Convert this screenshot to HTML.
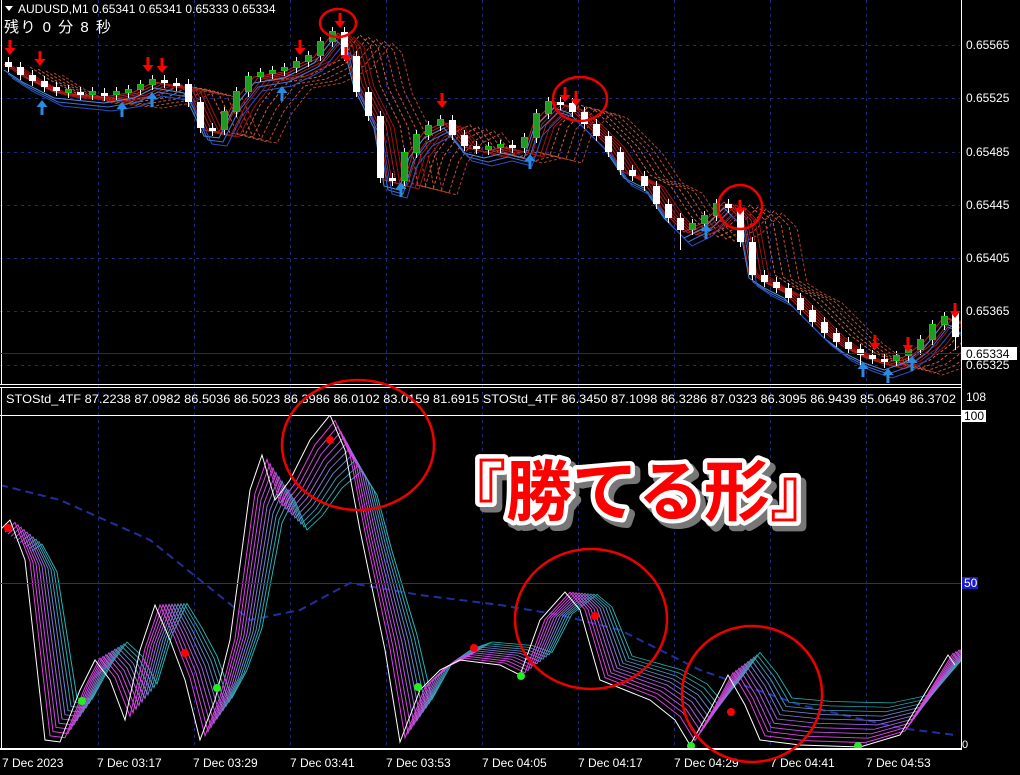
<!DOCTYPE html>
<html><head><meta charset="utf-8"><style>
html,body{margin:0;padding:0;background:#000;width:1020px;height:775px;overflow:hidden}
svg{display:block;font-family:"Liberation Sans","Noto Sans CJK JP",sans-serif}
</style></head><body>
<svg width="1020" height="775" viewBox="0 0 1020 775" xmlns="http://www.w3.org/2000/svg" xmlns:xlink="http://www.w3.org/1999/xlink">
<defs>
<path id="pr" fill="none" d="M0 62 L20 75 L50 90 L100 95 L130 90 L150 80 L180 85 L200 128 L215 130 L230 100 L250 75 L280 70 L310 55 L330 30 L340 40 L350 80 L370 120 L380 178 L395 182 L405 150 L420 130 L440 120 L460 145 L480 150 L500 145 L520 150 L530 120 L550 100 L565 105 L580 120 L600 140 L620 170 L640 180 L660 210 L680 230 L700 220 L720 200 L735 215 L745 270 L760 280 L780 290 L800 310 L820 330 L840 345 L860 355 L880 362 L900 355 L920 340 L940 315 L955 322"/>
<path id="st" fill="none" d="M0 530 L10 520 L25 560 L45 740 L60 742 L80 690 L95 660 L110 680 L125 720 L140 650 L155 605 L170 640 L185 680 L200 740 L215 700 L230 640 L250 490 L262 455 L275 500 L290 480 L310 440 L330 415 L345 450 L360 530 L385 650 L400 742 L420 690 L440 670 L460 660 L500 665 L520 675 L540 620 L565 592 L580 610 L600 680 L625 690 L650 700 L675 720 L690 745 L710 710 L728 675 L745 705 L760 740 L800 745 L860 747 L900 735 L930 685 L948 655 L955 665"/>
<path id="da" fill="#f00" d="M-1.5 -15 h3 v8 h4 l-5.5 7 l-5.5 -7 h4z"/>
<path id="ua" fill="#2a8ae0" d="M-1.5 15 h3 v-8 h4 l-5.5 -7 l-5.5 7 h4z"/>
<clipPath id="ct"><rect x="2" y="0" width="959" height="384"/></clipPath>
<clipPath id="cb"><rect x="2" y="416" width="959" height="332"/></clipPath>
</defs>
<rect width="1020" height="775" fill="#000"/>
<path stroke="#1c2a7a" stroke-dasharray="3,4" fill="none" d="M98.5 0V748M194.5 0V748M290.5 0V748M386.5 0V748M482.5 0V748M578.5 0V748M674.5 0V748M770.5 0V748M866.5 0V748M0 45.5H960M0 98.5H960M0 152.5H960M0 205.5H960M0 258.5H960M0 311.5H960M0 365.5H960"/>
<g clip-path="url(#ct)">
<g stroke-width="1">
<use xlink:href="#pr" href="#pr" stroke="#d06040" stroke-dasharray="3,2" transform="translate(30,5)"/>
<use xlink:href="#pr" href="#pr" stroke="#d06040" stroke-dasharray="3,2" transform="translate(38,7)"/>
<use xlink:href="#pr" href="#pr" stroke="#c05030" stroke-dasharray="3,2" transform="translate(46,9)"/>
<use xlink:href="#pr" href="#pr" stroke="#c05030" stroke-dasharray="3,2" transform="translate(54,11)"/>
<use xlink:href="#pr" href="#pr" stroke="#b04030" stroke-dasharray="3,2" transform="translate(62,13)"/>
<use xlink:href="#pr" href="#pr" stroke="#c02020" transform="translate(4,2)"/>
<use xlink:href="#pr" href="#pr" stroke="#c02020" transform="translate(8,3)"/>
<use xlink:href="#pr" href="#pr" stroke="#b01818" transform="translate(12,4)"/>
<use xlink:href="#pr" href="#pr" stroke="#b01818" transform="translate(16,5)"/>
<use xlink:href="#pr" href="#pr" stroke="#a01010" transform="translate(20,6)"/>
<use xlink:href="#pr" href="#pr" stroke="#a01010" transform="translate(24,7)"/>
<use xlink:href="#pr" href="#pr" stroke="#4a90e0" transform="translate(4,8)"/>
<use xlink:href="#pr" href="#pr" stroke="#3a70d0" transform="translate(8,12)"/>
<use xlink:href="#pr" href="#pr" stroke="#2a50c0" transform="translate(12,16)"/>
</g>
<g stroke="#fff" stroke-width="1">
<path d="M8.5 57V72M20.5 62V80M32.5 70V86M44.5 76V92M56.5 82V96M68.5 85V98M80.5 87V100M92.5 87V100M104.5 88V101M116.5 87V100M128.5 85V98M140.5 80V95M152.5 75V90M164.5 75V88M176.5 78V91M188.5 79V107M200.5 97V133M212.5 123V136M224.5 107V135M236.5 87V117M248.5 72V97M260.5 68V82M272.5 66V79M284.5 63V76M296.5 57V73M308.5 51V67M320.5 37V61M332.5 27V47M344.5 27V61M356.5 51V97M368.5 87V121M380.5 111V183M392.5 173V186M404.5 148V186M416.5 130V158M428.5 121V140M440.5 115V131M452.5 115V140M464.5 130V151M476.5 141V154M488.5 142V155M500.5 140V153M512.5 140V153M524.5 133V153M536.5 109V143M548.5 97V119M560.5 97V110M572.5 98V117M584.5 107V129M596.5 119V141M608.5 131V157M620.5 147V175M632.5 165V181M644.5 171V191M656.5 181V209M668.5 199V223M680.5 213V250M692.5 219V235M704.5 211V229M716.5 199V221M728.5 199V213M740.5 203V247M752.5 237V280M764.5 270V287M776.5 277V293M788.5 283V303M800.5 293V315M812.5 305V327M824.5 317V338M836.5 328V347M848.5 337V354M860.5 344V365M872.5 350V364M884.5 354V368M896.5 351V366M908.5 345V361M920.5 335V355M932.5 320V345M944.5 312V330M955.5 305V350"/>
</g>
<g fill="#fff">
<rect x="5" y="62" width="7" height="5"/><rect x="17" y="67" width="7" height="8"/><rect x="29" y="75" width="7" height="6"/><rect x="41" y="81" width="7" height="6"/><rect x="53" y="87" width="7" height="4"/><rect x="77" y="92" width="7" height="3"/><rect x="101" y="93" width="7" height="3"/><rect x="161" y="80" width="7" height="3"/><rect x="173" y="83" width="7" height="3"/><rect x="185" y="84" width="7" height="18"/><rect x="197" y="102" width="7" height="26"/><rect x="209" y="128" width="7" height="3"/><rect x="341" y="32" width="7" height="24"/><rect x="353" y="56" width="7" height="36"/><rect x="365" y="92" width="7" height="24"/><rect x="377" y="116" width="7" height="62"/><rect x="389" y="178" width="7" height="3"/><rect x="449" y="120" width="7" height="15"/><rect x="461" y="135" width="7" height="11"/><rect x="473" y="146" width="7" height="3"/><rect x="509" y="145" width="7" height="3"/><rect x="557" y="102" width="7" height="3"/><rect x="569" y="103" width="7" height="9"/><rect x="581" y="112" width="7" height="12"/><rect x="593" y="124" width="7" height="12"/><rect x="605" y="136" width="7" height="16"/><rect x="617" y="152" width="7" height="18"/><rect x="629" y="170" width="7" height="6"/><rect x="641" y="176" width="7" height="10"/><rect x="653" y="186" width="7" height="18"/><rect x="665" y="204" width="7" height="14"/><rect x="677" y="218" width="7" height="12"/><rect x="725" y="204" width="7" height="4"/><rect x="737" y="208" width="7" height="34"/><rect x="749" y="242" width="7" height="33"/><rect x="761" y="275" width="7" height="7"/><rect x="773" y="282" width="7" height="6"/><rect x="785" y="288" width="7" height="10"/><rect x="797" y="298" width="7" height="12"/><rect x="809" y="310" width="7" height="12"/><rect x="821" y="322" width="7" height="11"/><rect x="833" y="333" width="7" height="9"/><rect x="845" y="342" width="7" height="7"/><rect x="857" y="349" width="7" height="6"/><rect x="869" y="355" width="7" height="4"/><rect x="881" y="359" width="7" height="3"/><rect x="952" y="312" width="7" height="25"/>
</g>
<g fill="#229922" stroke="#0c0" stroke-width="1">
<rect x="65.5" y="89.5" width="6" height="3"/><rect x="89.5" y="91.5" width="6" height="3"/><rect x="113.5" y="91.5" width="6" height="3"/><rect x="125.5" y="89.5" width="6" height="3"/><rect x="137.5" y="84.5" width="6" height="5"/><rect x="149.5" y="79.5" width="6" height="5"/><rect x="221.5" y="111.5" width="6" height="18"/><rect x="233.5" y="91.5" width="6" height="20"/><rect x="245.5" y="76.5" width="6" height="15"/><rect x="257.5" y="72.5" width="6" height="4"/><rect x="269.5" y="70.5" width="6" height="3"/><rect x="281.5" y="67.5" width="6" height="3"/><rect x="293.5" y="61.5" width="6" height="6"/><rect x="305.5" y="55.5" width="6" height="6"/><rect x="317.5" y="41.5" width="6" height="14"/><rect x="329.5" y="31.5" width="6" height="10"/><rect x="401.5" y="152.5" width="6" height="28"/><rect x="413.5" y="134.5" width="6" height="18"/><rect x="425.5" y="125.5" width="6" height="9"/><rect x="437.5" y="119.5" width="6" height="6"/><rect x="485.5" y="146.5" width="6" height="3"/><rect x="497.5" y="144.5" width="6" height="3"/><rect x="521.5" y="137.5" width="6" height="10"/><rect x="533.5" y="113.5" width="6" height="24"/><rect x="545.5" y="101.5" width="6" height="12"/><rect x="689.5" y="223.5" width="6" height="6"/><rect x="701.5" y="215.5" width="6" height="8"/><rect x="713.5" y="203.5" width="6" height="12"/><rect x="893.5" y="355.5" width="6" height="5"/><rect x="905.5" y="349.5" width="6" height="6"/><rect x="917.5" y="339.5" width="6" height="10"/><rect x="929.5" y="324.5" width="6" height="15"/><rect x="941.5" y="316.5" width="6" height="8"/>
</g>
<use href="#da" xlink:href="#da" x="10" y="55"/><use href="#da" xlink:href="#da" x="40" y="66"/><use href="#da" xlink:href="#da" x="148" y="72"/><use href="#da" xlink:href="#da" x="162" y="73"/><use href="#da" xlink:href="#da" x="300" y="55"/><use href="#da" xlink:href="#da" x="340" y="28"/><use href="#da" xlink:href="#da" x="346" y="62"/><use href="#da" xlink:href="#da" x="442" y="108"/><use href="#da" xlink:href="#da" x="565" y="102"/><use href="#da" xlink:href="#da" x="576" y="106"/><use href="#da" xlink:href="#da" x="740" y="215"/><use href="#da" xlink:href="#da" x="875" y="350"/><use href="#da" xlink:href="#da" x="908" y="352"/><use href="#da" xlink:href="#da" x="955" y="318"/>
<use href="#ua" xlink:href="#ua" x="42" y="100"/><use href="#ua" xlink:href="#ua" x="122" y="102"/><use href="#ua" xlink:href="#ua" x="152" y="92"/><use href="#ua" xlink:href="#ua" x="282" y="86"/><use href="#ua" xlink:href="#ua" x="401" y="182"/><use href="#ua" xlink:href="#ua" x="530" y="154"/><use href="#ua" xlink:href="#ua" x="706" y="224"/><use href="#ua" xlink:href="#ua" x="863" y="362"/><use href="#ua" xlink:href="#ua" x="888" y="368"/><use href="#ua" xlink:href="#ua" x="912" y="356"/>
</g>
<g clip-path="url(#cb)">
<path d="M0 485 L60 500 L150 540 L250 620 L300 610 L350 583 L420 595 L500 605 L560 615 L620 630 L700 670 L800 705 L900 728 L955 735" fill="none" stroke="#2030a0" stroke-width="2" stroke-dasharray="8,5"/>
<g stroke-width="1">
<use href="#st" xlink:href="#st" stroke="#20b8b8" transform="translate(32,180) scale(1,0.7)"/>
<use href="#st" xlink:href="#st" stroke="#30a8b8" transform="translate(29,162) scale(1,0.73)"/>
<use href="#st" xlink:href="#st" stroke="#4898c0" transform="translate(26,144) scale(1,0.76)"/>
<use href="#st" xlink:href="#st" stroke="#6888c8" transform="translate(23,126) scale(1,0.79)"/>
<use href="#st" xlink:href="#st" stroke="#8878d0" transform="translate(20,108) scale(1,0.82)"/>
<use href="#st" xlink:href="#st" stroke="#a068d8" transform="translate(17,90) scale(1,0.85)"/>
<use href="#st" xlink:href="#st" stroke="#b858e0" transform="translate(14,72) scale(1,0.88)"/>
<use href="#st" xlink:href="#st" stroke="#c850e0" transform="translate(11,54) scale(1,0.91)"/>
<use href="#st" xlink:href="#st" stroke="#d848e0" transform="translate(8,36) scale(1,0.94)"/>
<use href="#st" xlink:href="#st" stroke="#e040e0" transform="translate(5,18) scale(1,0.97)"/>
<use href="#st" xlink:href="#st" stroke="#fff"/>
</g>
<g fill="#f00"><circle cx="8" cy="528" r="4"/><circle cx="185" cy="653" r="4"/><circle cx="330" cy="440" r="4"/><circle cx="474" cy="648" r="4"/><circle cx="595" cy="616" r="4"/><circle cx="731" cy="712" r="4"/></g>
<g fill="#2e2"><circle cx="82" cy="701" r="4"/><circle cx="217" cy="688" r="4"/><circle cx="418" cy="687" r="4"/><circle cx="521" cy="676" r="4"/><circle cx="691" cy="746" r="4"/><circle cx="858" cy="746" r="4"/></g>
</g>
<line x1="961.5" y1="0" x2="961.5" y2="750" stroke="#fff"/>
<line x1="1.5" y1="0" x2="1.5" y2="385" stroke="#fff"/>
<line x1="0" y1="384.5" x2="961" y2="384.5" stroke="#fff"/>
<line x1="0" y1="387.5" x2="961" y2="387.5" stroke="#fff"/>
<line x1="1.5" y1="387" x2="1.5" y2="750" stroke="#fff"/>
<line x1="0" y1="415.5" x2="961" y2="415.5" stroke="#fff"/>
<line x1="0" y1="583.5" x2="961" y2="583.5" stroke="#2020dd"/>
<line x1="0" y1="353.5" x2="961" y2="353.5" stroke="#2020aa"/>
<line x1="0" y1="749" x2="961" y2="749" stroke="#fff" stroke-width="2"/>
<g fill="#fff" font-size="12">
<text x="18" y="13">AUDUSD,M1  0.65341 0.65341 0.65333 0.65334</text>
<text x="4" y="32" font-size="15" letter-spacing="1.5">残り 0 分 8 秒</text>
<text x="6" y="403" textLength="950" lengthAdjust="spacingAndGlyphs">STOStd_4TF 87.2238 87.0982 86.5036 86.5023 86.3986 86.0102 83.0159 81.6915  STOStd_4TF 86.3450 87.1098 86.3286 87.0323 86.3095 86.9439 85.0649 86.3702</text>
<text x="966" y="49">0.65565</text><text x="966" y="102">0.65525</text><text x="966" y="156">0.65485</text>
<text x="966" y="209">0.65445</text><text x="966" y="262">0.65405</text><text x="966" y="315">0.65365</text>
<text x="966" y="369">0.65325</text>
<text x="966" y="401">108</text>
</g>
<path d="M5 6 L13 6 L9 11Z" fill="#fff"/>
<rect x="962" y="347" width="55" height="13" fill="#fff"/><text x="966" y="358" font-size="12" fill="#000">0.65334</text>
<rect x="962" y="410" width="24" height="12" fill="#fff"/><text x="964" y="420" font-size="12" fill="#000">100</text>
<rect x="962" y="577" width="16" height="12" fill="#1a1acc"/><text x="964" y="587" font-size="12" fill="#fff">50</text>
<text x="962" y="748" font-size="11" fill="#fff">0</text>
<g fill="#fff" font-size="12">
<text x="2" y="767">7 Dec 2023</text><text x="97" y="767">7 Dec 03:17</text><text x="193" y="767">7 Dec 03:29</text>
<text x="290" y="767">7 Dec 03:41</text><text x="386" y="767">7 Dec 03:53</text><text x="482" y="767">7 Dec 04:05</text>
<text x="578" y="767">7 Dec 04:17</text><text x="674" y="767">7 Dec 04:29</text><text x="770" y="767">7 Dec 04:41</text>
<text x="866" y="767">7 Dec 04:53</text>
</g>
<g fill="none" stroke="#e00" stroke-width="2.5">
<ellipse cx="338" cy="23" rx="18" ry="14"/>
<ellipse cx="580" cy="99" rx="27" ry="22"/>
<ellipse cx="740" cy="207" rx="22" ry="22"/>
<ellipse cx="358" cy="445" rx="76" ry="65"/>
<ellipse cx="591" cy="619" rx="76" ry="70"/>
<ellipse cx="752" cy="694" rx="70" ry="68"/>
</g>
<g font-size="66" font-weight="bold" font-family="'Noto Sans CJK JP','Liberation Sans',sans-serif">
<text x="440" y="515" fill="#777" stroke="#777" stroke-width="10" stroke-linejoin="round" transform="translate(5,5)">『勝てる形』</text>
<text x="440" y="515" fill="#f00" stroke="#fff" stroke-width="9" stroke-linejoin="round">『勝てる形』</text>
<text x="440" y="515" fill="#f00">『勝てる形』</text>
</g>
</svg>
</body></html>
